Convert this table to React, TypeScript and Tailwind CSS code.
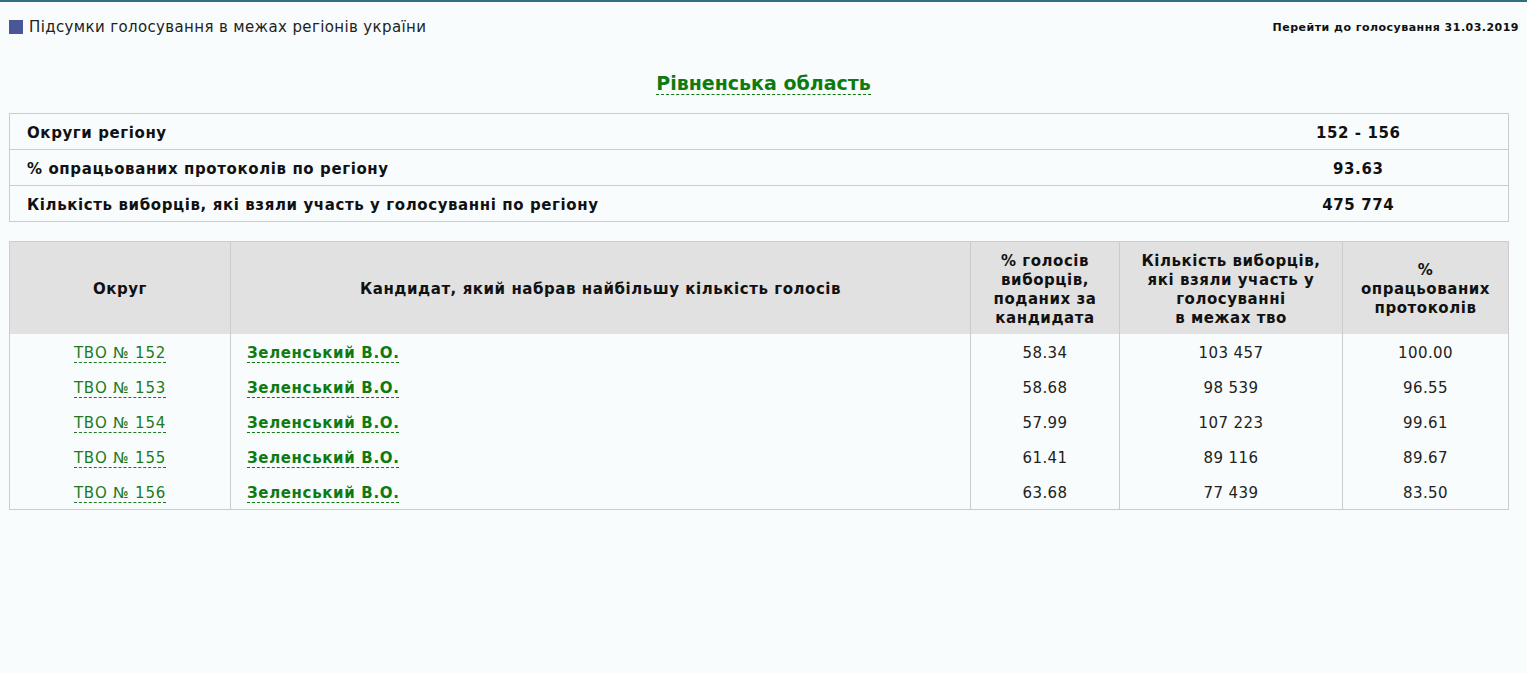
import React from "react";

const summary = [
  { label: "Округи регіону", value: "152 - 156" },
  { label: "% опрацьованих протоколів по регіону", value: "93.63" },
  { label: "Кількість виборців, які взяли участь у голосуванні по регіону", value: "475 774" },
];

const rows = [
  { tvo: "ТВО № 152", name: "Зеленський В.О.", pct: "58.34", voters: "103 457", done: "100.00" },
  { tvo: "ТВО № 153", name: "Зеленський В.О.", pct: "58.68", voters: "98 539", done: "96.55" },
  { tvo: "ТВО № 154", name: "Зеленський В.О.", pct: "57.99", voters: "107 223", done: "99.61" },
  { tvo: "ТВО № 155", name: "Зеленський В.О.", pct: "61.41", voters: "89 116", done: "89.67" },
  { tvo: "ТВО № 156", name: "Зеленський В.О.", pct: "63.68", voters: "77 439", done: "83.50" },
];

export default function App() {
  return (
    <div className="min-h-[673px] bg-[#f8fcfd] border-t-2 border-[#2f6f80] font-['DejaVu_Sans',Verdana,sans-serif] text-[#111]">
      {/* Header */}
      <div className="flex items-center justify-between px-[9px] pt-[15px]">
        <div className="flex items-center gap-[6px]">
          <span className="inline-block w-[14px] h-[14px] bg-[#4b5699]" />
          <span className="text-[15px] leading-[18px] tracking-[0.37px] text-[#222]">
            Підсумки голосування в межах регіонів україни
          </span>
        </div>
        <a href="#" className="text-[11px] font-bold tracking-[0.48px] text-[#111] mr-[-1px] mt-[3px]">
          Перейти до голосування 31.03.2019
        </a>
      </div>

      {/* Title */}
      <div className="flex justify-center mt-[35px]">
        <a href="#" className="text-[19px] leading-[22px] font-bold text-[#0f7a0f] border-b border-dashed border-[#0f7a0f]">
          Рівненська область
        </a>
      </div>

      {/* Region summary */}
      <div className="px-[9px] mt-[18px]">
        <table className="w-[1500px] border-collapse border border-[#c9cdcf] text-[15px] font-bold tracking-[0.6px]">
          <tbody>
            {summary.map((s) => (
              <tr key={s.label} className="h-[36px] border-b border-[#c9cdcf]">
                <td className="pl-[17px] pt-[4px]">{s.label}</td>
                <td className="w-[300px] pt-[4px] text-center">{s.value}</td>
              </tr>
            ))}
          </tbody>
        </table>
      </div>

      {/* Districts */}
      <div className="px-[9px] mt-[19px]">
        <table className="w-[1500px] border-collapse border border-[#c9cdcf] text-[15px]">
          <thead>
            <tr className="h-[93px] bg-[#e1e1e1] text-[15px] font-bold leading-[19px] tracking-[0.55px] text-center">
              <th className="w-[221px] pt-[4px] border-r border-[#c9cdcf]">Округ</th>
              <th className="w-[740px] pt-[4px] border-r border-[#c9cdcf]">Кандидат, який набрав найбільшу кількість голосів</th>
              <th className="w-[149px] pt-[4px] border-r border-[#c9cdcf]">
                % голосів
                <br />
                виборців,
                <br />
                поданих за
                <br />
                кандидата
              </th>
              <th className="w-[223px] pt-[4px] border-r border-[#c9cdcf]">
                Кількість виборців,
                <br />
                які взяли участь у
                <br />
                голосуванні
                <br />
                в межах тво
              </th>
              <th className="pt-[4px]">
                %
                <br />
                опрацьованих
                <br />
                протоколів
              </th>
            </tr>
          </thead>
          <tbody>
            {rows.map((r) => (
              <tr key={r.tvo} className="h-[35px] text-[#222] tracking-[0.4px]">
                <td className="pt-[4px] text-center border-r border-[#c9cdcf]">
                  <a href="#" className="text-[#1d7a1d] tracking-[0.8px] border-b border-dashed border-[#1d7a1d] leading-[17px]">
                    {r.tvo}
                  </a>
                </td>
                <td className="pt-[4px] pl-[16px] border-r border-[#c9cdcf]">
                  <a href="#" className="font-bold tracking-[0.65px] text-[#0f7a0f] border-b border-dashed border-[#0f7a0f] leading-[17px]">
                    {r.name}
                  </a>
                </td>
                <td className="pt-[4px] text-center border-r border-[#c9cdcf]">{r.pct}</td>
                <td className="pt-[4px] text-center border-r border-[#c9cdcf]">{r.voters}</td>
                <td className="pt-[4px] text-center">{r.done}</td>
              </tr>
            ))}
          </tbody>
        </table>
      </div>
    </div>
  );
}
